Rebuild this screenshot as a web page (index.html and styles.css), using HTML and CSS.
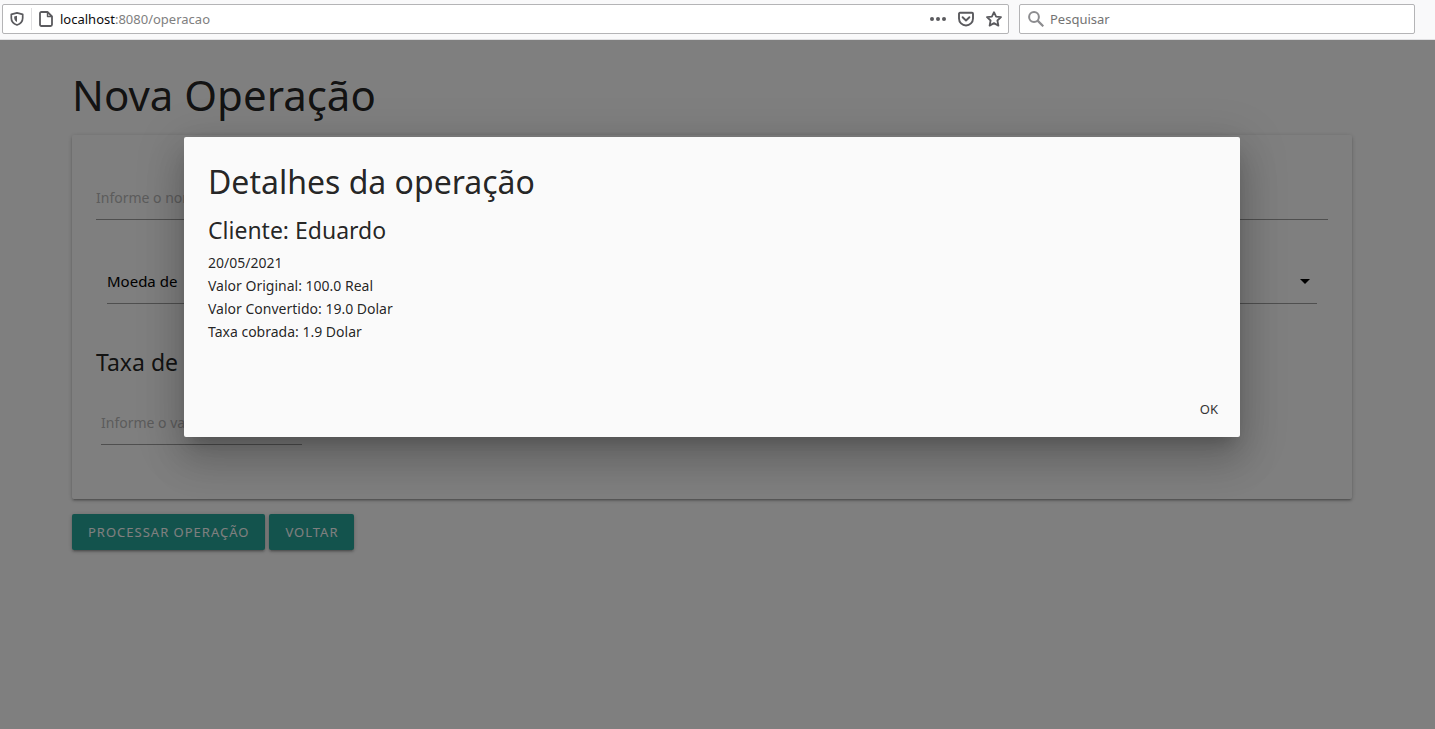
FILE: index.html
```html
<!DOCTYPE html>
<html lang="pt-BR">
<head>
<meta charset="utf-8">
<title>Nova Operação</title>
<link rel="stylesheet" href="styles.css">
</head>
<body>
<header class="toolbar">
  <div class="address">
    <button class="tool tool-shield" type="button" aria-label="Proteção">
      <svg width="14" height="14" viewBox="0 0 14 14" fill="none" stroke="#5a5a5e" stroke-width="1.7"><path d="M7 .9 12.7 2.3V6c0 3.200-2 5.700-5.700 7C3.300 11.700 1.300 9.200 1.300 6V2.300z" stroke-linejoin="round"/><path d="M7 3.800V10C5.200 9 4.200 7.600 4.200 5.800V4.400z" fill="#5a5a5e" stroke="none"/></svg>
    </button>
    <svg class="page-icon" width="16" height="16" viewBox="0 0 16 16" fill="none" stroke="#5a5a5e" stroke-width="1.800" stroke-linejoin="round"><path d="M3.500 1H9.500L14 5.500V13.500Q14 15 12.500 15H3.500Q2 15 2 13.500V2.500Q2 1 3.500 1z"/><path d="M9.500 1.500V5.500H13.500" stroke-width="1.400"/></svg>
    <div class="url" role="textbox" contenteditable="true" spellcheck="false" aria-label="Endereço"><span class="url-host">localhost</span>:8080/operacao</div>
    <div class="tools">
      <button class="tool" type="button" aria-label="Mais ações"><svg width="16" height="16" viewBox="0 0 16 16" fill="#5a5a5e"><circle cx="2" cy="8" r="2"/><circle cx="8" cy="8" r="2"/><circle cx="14" cy="8" r="2"/></svg></button>
      <button class="tool" type="button" aria-label="Salvar no Pocket"><svg width="16" height="16" viewBox="0 0 16 16" fill="none" stroke="#5a5a5e" stroke-width="1.900" stroke-linecap="round" stroke-linejoin="round"><path d="M2 1.800H14Q15 1.800 15 2.800V7.500A7 7 0 0 1 1 7.500V2.800Q1 1.800 2 1.800z"/><path d="M4.600 6.200 8 9.500l3.400-3.300"/></svg></button>
      <button class="tool" type="button" aria-label="Adicionar aos favoritos"><svg width="16" height="16" viewBox="0 0 16 16" fill="none" stroke="#5a5a5e" stroke-width="1.800" stroke-linejoin="round"><path d="M8 1.200 10.100 5.600 15 6.200 11.400 9.500 12.400 14.600 8 12.100 3.600 14.600 4.600 9.500 1 6.200 5.900 5.600z"/></svg></button>
    </div>
  </div>
  <label class="search">
    <svg width="16" height="16" viewBox="0 0 16 16" fill="none" stroke="#8c8c8f" stroke-width="2"><circle cx="6" cy="6" r="4.900"/><path d="M9.600 9.600 15.300 15.300" stroke-width="2.200"/></svg>
    <input class="search-input" type="search" placeholder="Pesquisar" aria-label="Pesquisar">
  </label>
</header>

<div class="viewport">
  <main class="container">
    <h1 class="page-title">Nova Operação</h1>
    <form id="operacao">
      <div class="card">
        <input class="field" type="text" placeholder="Informe o nome do cliente" aria-label="Nome do cliente">
        <div class="select-wrap">
          <select class="field select" aria-label="Moeda"><option>Moeda de</option><option>Real</option><option>Dolar</option></select>
          <svg class="caret" width="10" height="5" viewBox="0 0 10 5"><path d="M0 0h10L5 5z"/></svg>
        </div>
        <h2 class="subtitle">Taxa de conversão</h2>
        <div class="amount"><input class="field" type="text" placeholder="Informe o valor" aria-label="Valor"></div>
      </div>
      <div class="actions">
        <button class="btn" type="submit">Processar operação</button>
        <button class="btn" type="button">Voltar</button>
      </div>
    </form>
  </main>

  <div class="overlay"></div>
  <section class="modal" role="dialog" aria-labelledby="modal-title">
    <div class="modal-content">
      <h2 class="modal-title" id="modal-title">Detalhes da operação</h2>
      <h3 class="modal-client">Cliente: Eduardo</h3>
      <p class="details">20/05/2021<br>Valor Original: 100.0 Real<br>Valor Convertido: 19.0 Dolar<br>Taxa cobrada: 1.9 Dolar</p>
    </div>
    <footer class="modal-footer"><button class="btn-flat" type="button">OK</button></footer>
  </section>
</div>
</body>
</html>
```
FILE: styles.css
```css
* { box-sizing: border-box; }

body {
  margin: 0;
  min-height: 100vh;
  display: flex;
  flex-direction: column;
  font-family: "Noto Sans", "Open Sans", sans-serif;
  font-size: 14px;
  color: rgba(0, 0, 0, .87);
}

h1, h2, h3, p { margin: 0; font-weight: 400; }
button, input, select { font: inherit; color: inherit; }

/* Browser bar */
.toolbar {
  display: grid;
  grid-template-columns: 1007fr 396fr;
  gap: 10px;
  height: 40px;
  padding: 4px 20px 5px 2px;
  background: #f9f9fa;
  border-bottom: 1px solid #e0e0e2;
  font-size: 13px;
}
.address, .search {
  display: flex;
  align-items: center;
  background: #fff;
  border: 1px solid #b4b4b6;
  border-radius: 2px;
}
.address { padding-right: 6px; }
.search { padding-left: 8px; gap: 6px; }
.search-input {
  flex: 1;
  min-width: 0;
  padding: 0;
  border: 0;
  outline: 0;
  background: none;
}
.search-input::placeholder { color: #737373; opacity: 1; }
.tool {
  display: flex;
  padding: 0;
  border: 0;
  background: none;
}
.tool-shield {
  height: 22px;
  align-items: center;
  padding: 0 7px;
  border-right: 1px solid #e0e0e2;
}
.page-icon { margin: 0 6px; }
.url { flex: 1; color: #808080; outline: 0; }
.url-host { color: #0c0c0d; }
.tools { display: flex; gap: 12px; }

/* Page */
.viewport {
  position: relative;
  flex: 1;
  padding-right: 11px;
  background: #fff;
}
.container {
  width: 90%;
  max-width: 1280px;
  margin: 0 auto;
  padding-top: 31px;
}
.page-title { font-size: 42px; line-height: 48px; }
.card {
  margin-top: 16px;
  padding: 39px 24px 54px;
  border-radius: 2px;
  box-shadow: 0 2px 2px rgba(0, 0, 0, .14), 0 3px 1px -2px rgba(0, 0, 0, .12), 0 1px 5px rgba(0, 0, 0, .2);
}
.field {
  display: block;
  width: 100%;
  height: 46px;
  padding: 1px 0 0;
  border: 0;
  border-bottom: 1px solid #9e9e9e;
  border-radius: 0;
  outline: 0;
  background: none;
}
.field::placeholder { color: #b8b8b8; opacity: 1; }
.select-wrap { position: relative; margin: 38px 11px 0; }
.select { appearance: none; color: #000; font-size: 15px; }
.caret { position: absolute; right: 7px; top: 21px; }
.subtitle { margin-top: 44px; font-size: 23px; line-height: 28px; }
.amount { width: 201px; margin: 23px 5px 0; }
.actions { display: flex; gap: 4px; margin-top: 15px; }
.btn {
  height: 36px;
  padding: 0 16px;
  border: 0;
  border-radius: 2px;
  background: #26a69a;
  box-shadow: 0 2px 2px rgba(0, 0, 0, .14), 0 3px 1px -2px rgba(0, 0, 0, .12), 0 1px 5px rgba(0, 0, 0, .2);
  color: #fff;
  font-size: 13px;
  letter-spacing: 1px;
  text-transform: uppercase;
}

/* Dialog */
.overlay { position: absolute; inset: 0; background: rgba(0, 0, 0, .5); }
.modal {
  position: absolute;
  top: 97px;
  left: 0;
  right: 11px;
  max-width: 1056px;
  margin: 0 auto;
  border-radius: 2px;
  background: #fafafa;
  box-shadow: 0 24px 38px 3px rgba(0, 0, 0, .14), 0 9px 46px 8px rgba(0, 0, 0, .12), 0 11px 15px -7px rgba(0, 0, 0, .2);
}
.modal-content { padding: 25px 24px 38px; }
.modal-title { font-size: 32px; line-height: 40px; }
.modal-client { margin-top: 14px; font-size: 23px; line-height: 28px; }
.details { margin-top: 7px; line-height: 23px; }
.modal-footer {
  display: flex;
  justify-content: flex-end;
  padding: 10px 6px;
}
.btn-flat {
  height: 36px;
  padding: 0 16px;
  border: 0;
  background: none;
  color: #343434;
  font-size: 13px;
}
```
